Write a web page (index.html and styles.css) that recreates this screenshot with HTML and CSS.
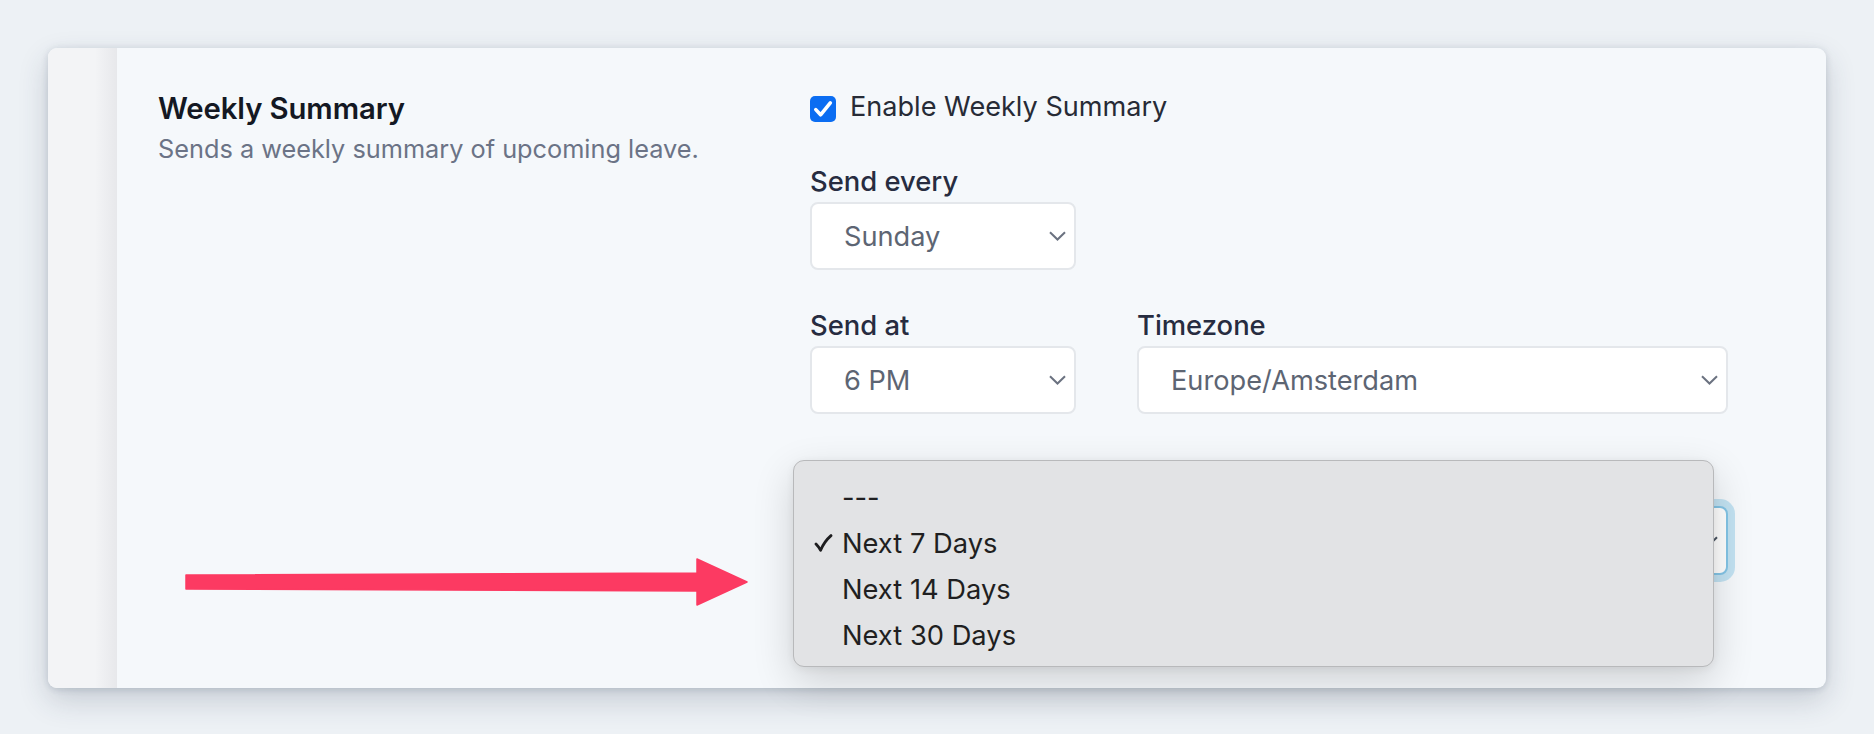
FILE: index.html
```html
<!DOCTYPE html>
<html lang="en">
<head>
<meta charset="utf-8">
<title>Weekly Summary</title>
<link rel="stylesheet" href="styles.css">
</head>
<body>
<div class="page">
  <div class="card">
    <div class="strip"></div>
    <div class="content">
      <div class="intro">
        <h2 class="title">Weekly Summary</h2>
        <p class="desc">Sends a weekly summary of upcoming leave.</p>
      </div>
      <div class="form">
        <label class="check-row">
          <svg class="checkbox" width="26" height="26" viewBox="0 0 26 26"><rect width="26" height="26" rx="5" fill="#0b6df2"/><path d="M5.8 13.6 L10.6 18.8 L20.3 6.8" fill="none" stroke="#fff" stroke-width="3.6" stroke-linecap="round" stroke-linejoin="round"/></svg>
          <span class="check-text">Enable Weekly Summary</span>
        </label>

        <div class="field first">
          <div class="label">Send every</div>
          <div class="select small">
            <span class="value">Sunday</span>
            <svg class="chev" width="17" height="10" viewBox="0 0 17 10"><path d="M1 1.2 L8.5 8.5 L16 1.2" fill="none" stroke="#6b7280" stroke-width="2"/></svg>
          </div>
        </div>

        <div class="row">
          <div class="field">
            <div class="label">Send at</div>
            <div class="select small">
              <span class="value">6 PM</span>
              <svg class="chev" width="17" height="10" viewBox="0 0 17 10"><path d="M1 1.2 L8.5 8.5 L16 1.2" fill="none" stroke="#6b7280" stroke-width="2"/></svg>
            </div>
          </div>
          <div class="field grow">
            <div class="label">Timezone</div>
            <div class="select">
              <span class="value">Europe/Amsterdam</span>
              <svg class="chev" width="17" height="10" viewBox="0 0 17 10"><path d="M1 1.2 L8.5 8.5 L16 1.2" fill="none" stroke="#6b7280" stroke-width="2"/></svg>
            </div>
          </div>
        </div>

        <div class="field period">
          <div class="select focused">
            <span class="value">Next 7 Days</span>
            <svg class="chev" width="17" height="10" viewBox="0 0 17 10"><path d="M1 1.2 L8.5 8.5 L16 1.2" fill="none" stroke="#4b5563" stroke-width="2"/></svg>
          </div>
          <ul class="menu">
            <li class="item"><span class="tick"></span><span>---</span></li>
            <li class="item"><span class="tick"><svg width="19" height="18" viewBox="0 0 19 18"><path d="M2 10 C3.5 11.5 5 13.5 6.6 16.2 C9 10.5 12.5 5.5 17 1.6" fill="none" stroke="#1d1d1f" stroke-width="2.8" stroke-linecap="round" stroke-linejoin="round"/></svg></span><span>Next 7 Days</span></li>
            <li class="item"><span class="tick"></span><span>Next 14 Days</span></li>
            <li class="item"><span class="tick"></span><span>Next 30 Days</span></li>
          </ul>
        </div>
      </div>
    </div>
    <svg class="arrow" width="564" height="48" viewBox="0 0 564 48"><polygon points="1,17 512,15 512,1 562,24 512,47 512,33 1,31" fill="#fc3a62" stroke="#fc3a62" stroke-width="1.5" stroke-linejoin="round"/></svg>
  </div>
</div>
</body>
</html>
```

FILE: styles.css
```css
* { box-sizing: border-box; }

html, body {
  margin: 0;
  padding: 0;
  background: #edf1f5;
  font-family: Inter, "Noto Sans", sans-serif;
}

.page {
  width: 1874px;
  height: 734px;
  padding: 48px 48px 0 48px;
  overflow: hidden;
}

.card {
  position: relative;
  display: flex;
  width: 1778px;
  border-radius: 9px;
  overflow: visible;
  background: #f5f8fb;
  box-shadow: 0 12px 30px rgba(40, 55, 80, 0.20), 0 2px 6px rgba(40, 55, 80, 0.10), 0 0 10px rgba(40, 55, 80, 0.06);
}

.strip {
  width: 69px;
  flex: none;
  border-radius: 9px 0 0 9px;
  background: linear-gradient(to right, #f3f4f6 0%, #f3f4f6 68%, #e7e8eb 100%);
}

.content {
  flex: 1;
  display: grid;
  grid-template-columns: 652px 1fr;
  padding: 42px 98px 113px 41px;
}

.title {
  margin: 2px 0 0 0;
  font-size: 29.3px;
  line-height: 34px;
  font-weight: 600;
  color: #141823;
  letter-spacing: -0.1px;
}

.desc {
  margin: 6px 0 0 0;
  font-size: 25.3px;
  line-height: 34px;
  color: #6b7386;
}

.form {
  display: flex;
  flex-direction: column;
}

.check-row {
  display: flex;
  align-items: flex-start;
  gap: 14px;
}

.checkbox {
  flex: none;
  margin-top: 6px;
}

.check-text {
  font-size: 27.1px;
  line-height: 34px;
  color: #272b36;
}

.field.first {
  margin-top: 40px;
}

.label {
  font-size: 27.4px;
  line-height: 34px;
  font-weight: 500;
  color: #272c40;
  margin-bottom: 4px;
}

.row {
  display: flex;
  gap: 61px;
  margin-top: 38px;
}

.field.grow {
  flex: 1;
}

.select {
  position: relative;
  display: flex;
  align-items: center;
  justify-content: space-between;
  height: 68px;
  padding: 0 8px 0 32px;
  background: #ffffff;
  border: 2px solid #e4e7eb;
  border-radius: 8px;
}

.select.small {
  width: 266px;
}

.value {
  font-size: 27.2px;
  color: #5d6573;
}

.chev {
  flex: none;
}

.field.period {
  position: relative;
  margin-top: 92px;
}

.select.focused {
  height: 69px;
  border-color: #84c5e6;
  box-shadow: 0 0 0 7px rgba(166, 213, 236, 0.65);
}

.menu {
  position: absolute;
  left: -17px;
  top: -46px;
  width: 921px;
  margin: 0;
  padding: 13px 0 8px 0;
  list-style: none;
  background: #e2e3e5;
  border: 1px solid #b8b9bb;
  border-radius: 11px;
  box-shadow: 0 14px 40px rgba(0, 0, 0, 0.16), 0 2px 8px rgba(0, 0, 0, 0.06);
}

.item {
  display: flex;
  align-items: center;
  height: 46px;
  padding-left: 20px;
  font-size: 27.3px;
  color: #1f1f21;
}

.tick {
  width: 28px;
  flex: none;
  display: flex;
  align-items: center;
}

.arrow {
  position: absolute;
  left: 137px;
  top: 510px;
}
```
